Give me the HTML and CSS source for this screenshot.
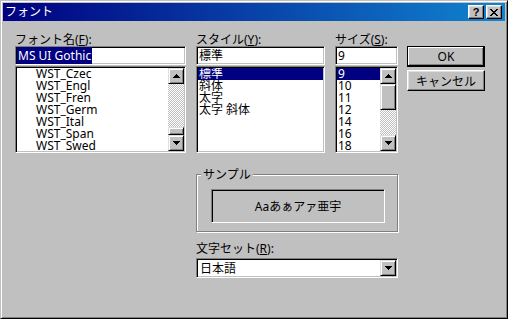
FILE: index.html
```html
<!DOCTYPE html>
<html>
<head>
    <title>フォント</title>
    <link rel="stylesheet" href="styles.css">
</head>
<body>
    <div class="window">
        <div class="titlebar">
            <span class="title">フォント</span>
            <div class="title-buttons">
                <div class="tbtn help">?</div>
                <div class="tbtn close">
                    <svg width="8" height="7" viewBox="0 0 8 7"><path d="M0 0h2v1h1v1h2V1h1V0h2v1H7v1H6v1H5v1h1v1h1v1h1v1H6V6H5V5H3v1H2v1H0V6h1V5h1V4h1V3H2V2H1V1H0z"/></svg>
                </div>
            </div>
        </div>

        <div class="content">
            <div class="top">
                <div class="col col-font">
                    <div class="label">フォント名(<u>F</u>):</div>
                    <div class="edit"><span class="sel">MS UI Gothic</span></div>
                    <div class="listbox">
                        <ul class="items font-items">
                            <li>WST_Czec</li>
                            <li>WST_Engl</li>
                            <li>WST_Fren</li>
                            <li>WST_Germ</li>
                            <li>WST_Ital</li>
                            <li>WST_Span</li>
                            <li>WST_Swed</li>
                        </ul>
                        <div class="vscroll">
                            <div class="sbtn"><svg width="7" height="4"><path d="M3 0h1v1h1v1h1v1h1v1H0V3h1V2h1V1h1z"/></svg></div>
                            <div class="track"></div>
                            <div class="thumb small"></div>
                            <div class="sbtn"><svg width="7" height="4"><path d="M0 0h7v1H6v1H5v1H4v1H3V3H2V2H1V1H0z"/></svg></div>
                        </div>
                    </div>
                </div>

                <div class="col col-style">
                    <div class="label">スタイル(<u>Y</u>):</div>
                    <div class="edit">標準</div>
                    <div class="listbox">
                        <ul class="items">
                            <li class="selected">標準</li>
                            <li>斜体</li>
                            <li>太字</li>
                            <li>太字 斜体</li>
                        </ul>
                    </div>
                </div>

                <div class="col col-size">
                    <div class="label">サイズ(<u>S</u>):</div>
                    <div class="edit">9</div>
                    <div class="listbox">
                        <ul class="items">
                            <li class="selected">9</li>
                            <li>10</li>
                            <li>11</li>
                            <li>12</li>
                            <li>14</li>
                            <li>16</li>
                            <li>18</li>
                        </ul>
                        <div class="vscroll">
                            <div class="sbtn"><svg width="7" height="4"><path d="M3 0h1v1h1v1h1v1h1v1H0V3h1V2h1V1h1z"/></svg></div>
                            <div class="thumb big"></div>
                            <div class="track"></div>
                            <div class="sbtn"><svg width="7" height="4"><path d="M0 0h7v1H6v1H5v1H4v1H3V3H2V2H1V1H0z"/></svg></div>
                        </div>
                    </div>
                </div>

                <div class="col col-buttons">
                    <div class="btn default">OK</div>
                    <div class="btn">キャンセル</div>
                </div>
            </div>

            <div class="bottom">
                <div class="group">
                    <span class="group-label">サンプル</span>
                    <div class="sample">Aaあぁアァ亜宇</div>
                </div>
                <div class="label charset-label">文字セット(<u>R</u>):</div>
                <div class="combo">
                    <span class="combo-text">日本語</span>
                    <div class="sbtn"><svg width="7" height="4"><path d="M0 0h7v1H6v1H5v1H4v1H3V3H2V2H1V1H0z"/></svg></div>
                </div>
            </div>
        </div>
    </div>
</body>
</html>
```

FILE: styles.css
```css
* {
    box-sizing: border-box;
}
body {
    margin: 0;
    font-family: "Noto Sans", "Noto Sans CJK JP", sans-serif;
    font-size: 12px;
    color: #000;
    background: #c0c0c0;
}
.window {
    width: 508px;
    height: 319px;
    background: #c0c0c0;
    border: 1px solid;
    border-color: #c0c0c0 #000 #000 #c0c0c0;
    box-shadow: inset 1px 1px #fff, inset -1px -1px #808080;
    padding: 2px;
}
.titlebar {
    height: 18px;
    display: flex;
    align-items: center;
    padding: 0 3px 0 2px;
    background: linear-gradient(to right, #000080, #1084d0);
    color: #fff;
}
.title {
    line-height: 18px;
}
.title-buttons {
    margin-left: auto;
    display: flex;
    gap: 2px;
}
.tbtn {
    width: 16px;
    height: 14px;
    display: flex;
    align-items: center;
    justify-content: center;
    background: #c0c0c0;
    color: #000;
    border: 1px solid;
    border-color: #fff #000 #000 #fff;
    box-shadow: inset -1px -1px #808080, inset 1px 1px #dfdfdf;
}
.tbtn.help {
    font-family: "Liberation Sans", sans-serif;
    font-weight: bold;
    font-size: 11px;
    line-height: 12px;
}
.content {
    padding: 12px 0 0 12px;
}
.top {
    display: flex;
}
.col-font {
    width: 171px;
    margin-right: 10px;
}
.col-style {
    width: 129px;
    margin-right: 10px;
}
.col-size {
    width: 63px;
    margin-right: 9px;
}
.col-buttons {
    width: 78px;
    padding-top: 13px;
}
.label {
    height: 13px;
    line-height: 13px;
    white-space: nowrap;
}
u {
    text-decoration-thickness: 1px;
    text-underline-offset: 1px;
}
.edit {
    height: 19px;
    margin-bottom: 1px;
    padding: 2px 2px 0;
    line-height: 14px;
    background: #fff;
    border: 1px solid;
    border-color: #808080 #fff #fff #808080;
    box-shadow: inset 1px 1px #000, inset -1px -1px #c0c0c0;
    white-space: nowrap;
}
.col-font .edit {
    padding-left: 1px;
}
.sel {
    background: #000080;
    color: #fff;
    padding: 0 1px;
}
.listbox {
    height: 87px;
    display: flex;
    padding: 1px;
    background: #fff;
    border: 1px solid;
    border-color: #808080 #fff #fff #808080;
    box-shadow: inset 1px 1px #000, inset -1px -1px #c0c0c0;
}
.items {
    flex: 1;
    list-style: none;
    margin: 0;
    padding: 0;
    overflow: hidden;
}
.items li {
    height: 12px;
    line-height: 12px;
    padding-left: 1px;
    white-space: nowrap;
}
.font-items li {
    padding-left: 19px;
}
.items li.selected {
    background: #000080;
    color: #fff;
}
.vscroll {
    width: 16px;
    display: flex;
    flex-direction: column;
}
.sbtn {
    width: 16px;
    height: 16px;
    flex: none;
    display: flex;
    align-items: center;
    justify-content: center;
    background: #c0c0c0;
    border: 1px solid;
    border-color: #dfdfdf #000 #000 #dfdfdf;
    box-shadow: inset 1px 1px #fff, inset -1px -1px #808080;
}
.track {
    flex: 1;
    background: repeating-conic-gradient(#c0c0c0 0% 25%, #fff 0% 50%) 0 0 / 2px 2px;
}
.thumb {
    flex: none;
    background: #c0c0c0;
    border: 1px solid;
    border-color: #dfdfdf #000 #000 #dfdfdf;
    box-shadow: inset 1px 1px #fff, inset -1px -1px #808080;
}
.thumb.small {
    height: 8px;
}
.thumb.big {
    height: 26px;
}
.btn {
    width: 78px;
    height: 21px;
    display: flex;
    align-items: center;
    justify-content: center;
    background: #c0c0c0;
    border: 1px solid;
    border-color: #fff #000 #000 #fff;
    box-shadow: inset -1px -1px #808080, inset 1px 1px #dfdfdf;
}
.btn + .btn {
    margin-top: 3px;
}
.btn.default {
    border-color: #000;
    box-shadow: inset -1px -1px #000, inset 1px 1px #fff, inset -2px -2px #808080;
}
.bottom {
    width: 202px;
    margin: 21px 0 0 181px;
}
.group {
    position: relative;
    height: 58px;
    padding: 14px 12px 8px 14px;
    border: 1px solid #808080;
    box-shadow: inset 1px 1px #fff, 1px 1px #fff;
}
.group-label {
    position: absolute;
    left: 4px;
    top: -7px;
    padding: 0 2px;
    line-height: 13px;
    background: #c0c0c0;
}
.sample {
    height: 34px;
    display: flex;
    align-items: center;
    justify-content: center;
    border: 1px solid;
    border-color: #808080 #fff #fff #808080;
    box-shadow: inset 1px 1px #000;
}
.charset-label {
    margin-top: 10px;
}
.combo {
    height: 20px;
    margin-top: 3px;
    display: flex;
    align-items: center;
    padding: 1px;
    background: #fff;
    border: 1px solid;
    border-color: #808080 #fff #fff #808080;
    box-shadow: inset 1px 1px #000, inset -1px -1px #c0c0c0;
}
.combo-text {
    flex: 1;
    padding-left: 2px;
}
```
